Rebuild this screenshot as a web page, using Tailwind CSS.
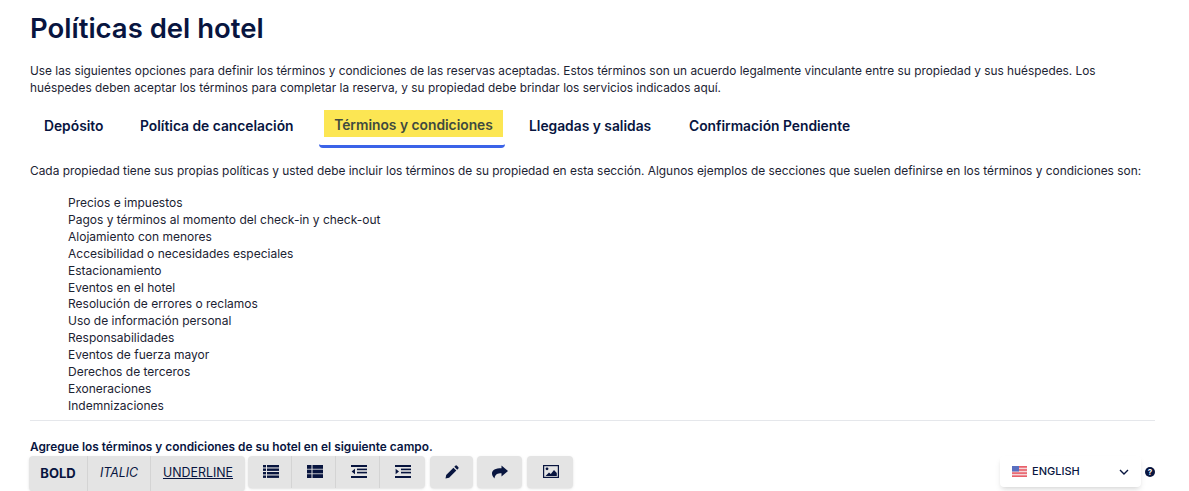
<!DOCTYPE html>
<html lang="es" class="h-full">
<head>
    <meta charset="UTF-8">
    <meta name="viewport" content="width=device-width, initial-scale=1.0">
    <title>Políticas del hotel</title>
    <script src="https://cdn.jsdelivr.net/npm/@tailwindcss/browser@4"></script>
</head>
<body class="bg-white h-[491px] overflow-hidden relative font-['Inter',sans-serif] text-[#0b1a40]">
    <div class="px-[30px] pt-[12px]">
        <!-- Cabecera -->
        <h1 class="text-[27.5px] leading-[32px] font-semibold text-[#08153f]">Políticas del hotel</h1>
        <p class="mt-[19px] text-[11.85px] leading-[17px] text-[#1c2333]">Use las siguientes opciones para definir los términos y condiciones de las reservas aceptadas. Estos términos son un acuerdo legalmente vinculante entre su propiedad y sus huéspedes. Los<br>huéspedes deben aceptar los términos para completar la reserva, y su propiedad debe brindar los servicios indicados aquí.</p>

        <!-- Tabs -->
        <div class="flex mt-[13px] text-[13.8px] font-semibold text-[#08153f] h-[38px]">
            <div class="ml-[14px] w-[96px] pt-[6px]">Depósito</div>
            <div class="w-[179px] pt-[6px]">Política de cancelación</div>
            <div class="w-[186px] border-b-[3px] border-[#3b63e8] rounded-b-sm pl-[5px] pr-[2px]">
                <div class="bg-[#fce653] h-[27px] pt-[4px] flex items-center justify-center text-[#3f4a3f]">Términos y condiciones</div>
            </div>
            <div class="ml-[24px] w-[160px] pt-[6px]">Llegadas y salidas</div>
            <div class="pt-[6px]">Confirmación Pendiente</div>
        </div>

        <p class="mt-[14px] text-[11.9px] leading-[17px] text-[#1c2333]">Cada propiedad tiene sus propias políticas y usted debe incluir los términos de su propiedad en esta sección. Algunos ejemplos de secciones que suelen definirse en los términos y condiciones son:</p>

        <ul class="mt-[16px] pl-[38px] text-[12px] leading-[16.9px] text-[#1c2333]">
            <li>Precios e impuestos</li>
            <li>Pagos y términos al momento del check-in y check-out</li>
            <li>Alojamiento con menores</li>
            <li>Accesibilidad o necesidades especiales</li>
            <li>Estacionamiento</li>
            <li>Eventos en el hotel</li>
            <li>Resolución de errores o reclamos</li>
            <li>Uso de información personal</li>
            <li>Responsabilidades</li>
            <li>Eventos de fuerza mayor</li>
            <li>Derechos de terceros</li>
            <li>Exoneraciones</li>
            <li>Indemnizaciones</li>
        </ul>

        <hr class="mt-[5px] w-[1125px] border-[#e5e7eb]">

        <p class="mt-[18px] text-[11.85px] leading-[16px] font-semibold text-[#08153f]">Agregue los términos y condiciones de su hotel en el siguiente campo.</p>

        <!-- Toolbar -->
        <div class="flex items-start mt-[1px] -ml-[1px] text-[#08153f]">
            <div class="flex h-[35px] text-[12.4px] bg-[#e4e4e4] rounded shadow-sm">
                <div class="w-[59px] flex items-center justify-center text-[13px] font-bold border-r border-[#d4d4d4]">BOLD</div>
                <div class="w-[63px] flex items-center justify-center italic border-r border-[#d4d4d4]">ITALIC</div>
                <div class="w-[94px] flex items-center justify-center underline">UNDERLINE</div>
            </div>
            <div class="flex h-[32px] ml-[3px] bg-[#e4e4e4] rounded shadow-sm">
                <div class="w-[44px] pl-[3px] flex items-center justify-center border-r border-[#d4d4d4]">
                    <svg width="16" height="13" viewBox="0 0 16 13" fill="currentColor"><rect x="0" y="0" width="3" height="2.4"/><rect x="4" y="0" width="12" height="2.4"/><rect x="0" y="3.5" width="3" height="2.4"/><rect x="4" y="3.5" width="12" height="2.4"/><rect x="0" y="7" width="3" height="2.4"/><rect x="4" y="7" width="12" height="2.4"/><rect x="0" y="10.5" width="3" height="2.4"/><rect x="4" y="10.5" width="12" height="2.4"/></svg>
                </div>
                <div class="w-[44px] pl-[3px] flex items-center justify-center border-r border-[#d4d4d4]">
                    <svg width="16" height="13" viewBox="0 0 16 13" fill="currentColor"><rect x="0" y="0" width="4.5" height="3.8"/><rect x="5.5" y="0" width="10.5" height="3.8"/><rect x="0" y="4.6" width="4.5" height="3.8"/><rect x="5.5" y="4.6" width="10.5" height="3.8"/><rect x="0" y="9.2" width="4.5" height="3.8"/><rect x="5.5" y="9.2" width="10.5" height="3.8"/></svg>
                </div>
                <div class="w-[44px] pl-[3px] flex items-center justify-center border-r border-[#d4d4d4]">
                    <svg width="16" height="13" viewBox="0 0 16 13" fill="currentColor"><rect x="0" y="0" width="16" height="2"/><rect x="6" y="3.6" width="10" height="1.6"/><rect x="6" y="6.8" width="10" height="1.6"/><rect x="0" y="11" width="16" height="2"/><path d="M4 3.8v5.4L0.6 6.5z"/></svg>
                </div>
                <div class="w-[45px] flex items-center justify-center">
                    <svg width="16" height="13" viewBox="0 0 16 13" fill="currentColor"><rect x="0" y="0" width="16" height="2"/><rect x="6" y="3.6" width="10" height="1.6"/><rect x="6" y="6.8" width="10" height="1.6"/><rect x="0" y="11" width="16" height="2"/><path d="M0.6 3.8v5.4L4 6.5z"/></svg>
                </div>
            </div>
            <div class="w-[43px] h-[32px] ml-[5px] flex items-center justify-center bg-[#e4e4e4] rounded shadow-sm">
                <svg width="14" height="14" viewBox="0 0 14 14" fill="currentColor"><path d="M0.5 13.5l0.7-3.6 7.2-7.2 2.9 2.9-7.2 7.2z"/><path d="M9.3 1.8l1-1a1.2 1.2 0 0 1 1.7 0l1.2 1.2a1.2 1.2 0 0 1 0 1.7l-1 1z"/></svg>
            </div>
            <div class="w-[45px] h-[32px] ml-[4px] pl-[1px] flex items-center justify-center bg-[#e4e4e4] rounded shadow-sm">
                <svg width="16" height="14" viewBox="0 0 16 14" fill="currentColor"><path d="M9.5 0.5L16 6l-6.500 5.500V8.200C5.500 8.200 3 9.300 2.500 13.500 0.500 11.500 0 9.800 0 8.500 0 5 3.500 3.300 9.500 3.300z"/></svg>
            </div>
            <div class="w-[46px] h-[32px] ml-[5px] pl-[1px] flex items-center justify-center bg-[#e4e4e4] rounded shadow-sm">
                <svg width="16" height="13" viewBox="0 0 16 13" fill="none"><rect x="0.6" y="0.6" width="14.8" height="11.8" stroke="currentColor" stroke-width="1.2"/><circle cx="4" cy="3.8" r="1.4" fill="currentColor"/><path d="M2.500 11l3.500-3.500 1.800 1.500L11 5l2.800 3v3z" fill="currentColor"/></svg>
            </div>
        </div>
    </div>

    <!-- Selector de idioma -->
    <div class="absolute left-[1000px] top-[456px] w-[141px] h-[31px] bg-white rounded shadow-md flex items-center pl-[12px] pr-[12px] text-[11px] font-medium text-[#08153f]">
        <svg width="15" height="11" viewBox="0 0 15 11" class="mr-[5px]"><rect width="15" height="11" fill="#e8606a"/><rect y="1.7" width="15" height="1.5" fill="#f5d5d8"/><rect y="4.8" width="15" height="1.5" fill="#f5d5d8"/><rect y="7.9" width="15" height="1.5" fill="#f5d5d8"/><rect width="7" height="5.5" fill="#5a6fc0"/></svg>
        <span>ENGLISH</span>
        <svg width="10" height="6" viewBox="0 0 10 6" fill="none" class="ml-auto"><path d="M1 1l4 4 4-4" stroke="currentColor" stroke-width="1.4"/></svg>
    </div>
    <div class="absolute left-[1145px] top-[467px] w-[10px] h-[10px] rounded-full bg-[#08153f] text-white text-[8px] font-bold leading-[10px] text-center">?</div>
</body>
</html>
